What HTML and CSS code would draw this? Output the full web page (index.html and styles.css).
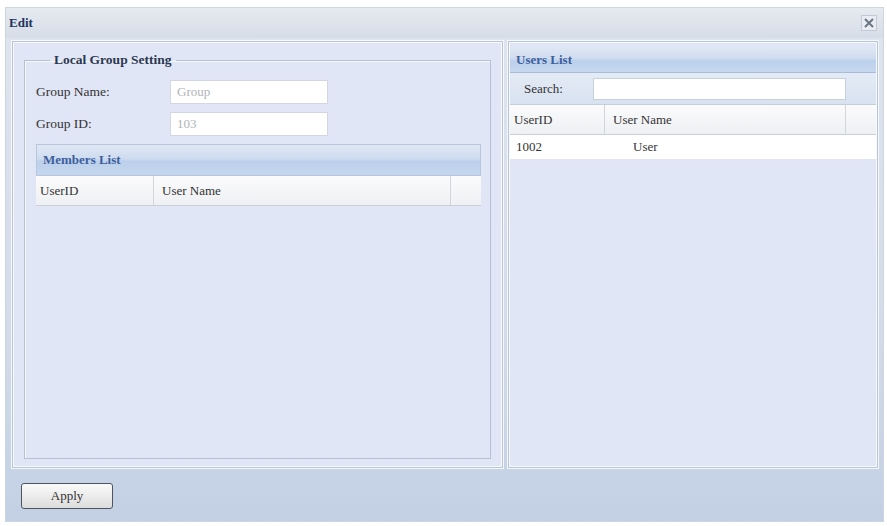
FILE: index.html
```html
<!DOCTYPE html>
<html lang="en">
<head>
    <meta charset="UTF-8">
    <title>Edit</title>
    <link rel="stylesheet" href="styles.css">
</head>
<body>
    <div class="window">
        <div class="titlebar">
            <span class="title">Edit</span>
            <span class="close">
                <svg width="10" height="10" viewBox="0 0 10 10"><path d="M1 1L9 9M9 1L1 9" stroke="#6a7483" stroke-width="2"/></svg>
            </span>
        </div>
        <div class="content">
            <div class="panel left">
                <fieldset class="group-set">
                    <legend>Local Group Setting</legend>
                    <div class="form-row">
                        <label>Group Name:</label>
                        <input type="text" value="Group" disabled>
                    </div>
                    <div class="form-row">
                        <label>Group ID:</label>
                        <input type="text" value="103" disabled>
                    </div>
                    <div class="grid members">
                        <div class="grid-head">Members List</div>
                        <div class="cols">
                            <div class="col c-id">UserID</div>
                            <div class="col c-name">User Name</div>
                            <div class="col c-end"></div>
                        </div>
                    </div>
                </fieldset>
            </div>
            <div class="panel right">
                <div class="grid-head">Users List</div>
                <div class="search">
                    <label>Search:</label>
                    <input type="text">
                </div>
                <div class="cols">
                    <div class="col c-id">UserID</div>
                    <div class="col c-name">User Name</div>
                    <div class="col c-end"></div>
                </div>
                <div class="row">
                    <div class="cell c-id">1002</div>
                    <div class="cell c-user">User</div>
                </div>
            </div>
        </div>
        <div class="footer">
            <button class="apply">Apply</button>
        </div>
    </div>
</body>
</html>
```

FILE: styles.css
```css
body {
    margin: 0;
    background: #ffffff;
    font-family: 'Liberation Serif', 'DejaVu Serif', serif;
    font-size: 13px;
    color: #333;
}
.window {
    margin: 7px 3px 0 5px;
    height: 513px;
    background: linear-gradient(180deg, #dfe5ee 0%, #d3dcea 60%, #c3d0e4 100%);
    border: 1px solid #cdd5e0;
    display: flex;
    flex-direction: column;
}
.titlebar {
    height: 30px;
    display: flex;
    align-items: center;
    justify-content: space-between;
    padding: 0 6px 0 3px;
    background: linear-gradient(180deg, #e6eaf0, #d6dde8);
}
.title {
    font-weight: bold;
    color: #1f3560;
    font-size: 13px;
}
.close {
    width: 14px;
    height: 14px;
    display: flex;
    align-items: center;
    justify-content: center;
    background: #e9edf3;
    border: 1px solid #c3cad6;
}
.content {
    display: flex;
    gap: 5px;
    padding: 3px 5px 0 6px;
    height: 427px;
}
.panel {
    background: #e1e6f6;
    border: 1px solid #b8c6d6;
    box-shadow: inset 0 0 0 1px #f6fafd, 0 0 0 1px #f4f8fb;
}
.panel.left {
    width: 491px;
    padding: 10px 11px 8px 11px;
    box-sizing: border-box;
}
.panel.right {
    flex: 1;
    padding: 5px 1px 1px;
}
.group-set {
    margin: 0;
    height: 100%;
    box-sizing: border-box;
    border: 1px solid #b5c2d2;
    box-shadow: 1px 1px 0 #f5f8fc inset;
    padding: 12px 9px 0 11px;
}
.group-set legend {
    font-weight: bold;
    color: #2a3850;
    padding: 0 4px;
    margin-left: 14px;
    font-size: 13.5px;
}
.form-row {
    display: flex;
    align-items: center;
    height: 24px;
    margin-bottom: 8px;
}
.form-row label {
    width: 134px;
    color: #333;
    font-size: 13.5px;
}
.form-row input {
    width: 158px;
    height: 24px;
    box-sizing: border-box;
    border: 1px solid #d2d8e2;
    background: #ffffff;
    font-family: inherit;
    font-size: 13px;
    color: #b0b4b8;
    padding: 2px 6px;
}
.grid-head {
    height: 30px;
    line-height: 30px;
    padding-left: 6px;
    font-weight: bold;
    color: #3c5f9c;
    background: linear-gradient(180deg, #dfe7f4 0%, #cfdcf0 45%, #bcd0ec 55%, #c6d7ef 100%);
    border-bottom: 1px solid #a9bcd6;
}
.right .grid-head {
    height: 25px;
    line-height: 25px;
}
.members .grid-head {
    border: 1px solid #b6c6dc;
}
.cols {
    display: flex;
    height: 29px;
    background: linear-gradient(180deg, #fbfbfc, #eef0f3);
    border-bottom: 1px solid #c9d0da;
}
.col {
    line-height: 29px;
    padding-left: 4px;
    border-right: 1px solid #d2d6dc;
}
.members .c-id { width: 113px; }
.members .c-name { flex: 1; padding-left: 8px; }
.members .c-end { width: 26px; border-right: none; }
.right .c-id { width: 90px; }
.right .c-name { flex: 1; padding-left: 8px; }
.right .c-end { width: 26px; border-right: none; }
.search {
    display: flex;
    align-items: center;
    height: 31px;
    padding-left: 14px;
    background: linear-gradient(180deg, #e4ebf6, #d8e2f0);
    border-bottom: 1px solid #c2cedd;
}
.search label {
    width: 69px;
    color: #333;
}
.search input {
    width: 253px;
    height: 22px;
    box-sizing: border-box;
    border: 1px solid #c8d0dc;
    background: #ffffff;
}
.row {
    display: flex;
    height: 24px;
    line-height: 24px;
    background: #ffffff;
}
.cell.c-id {
    width: 117px;
    padding-left: 6px;
}
.footer {
    flex: 1;
    padding: 15px 0 0 15px;
}
.apply {
    width: 92px;
    height: 26px;
    font-family: inherit;
    font-size: 13px;
    color: #333;
    border: 1px solid #4f5560;
    border-radius: 3px;
    background: linear-gradient(180deg, #fafafa 0%, #ececec 50%, #dcdcdc 100%);
}
```
